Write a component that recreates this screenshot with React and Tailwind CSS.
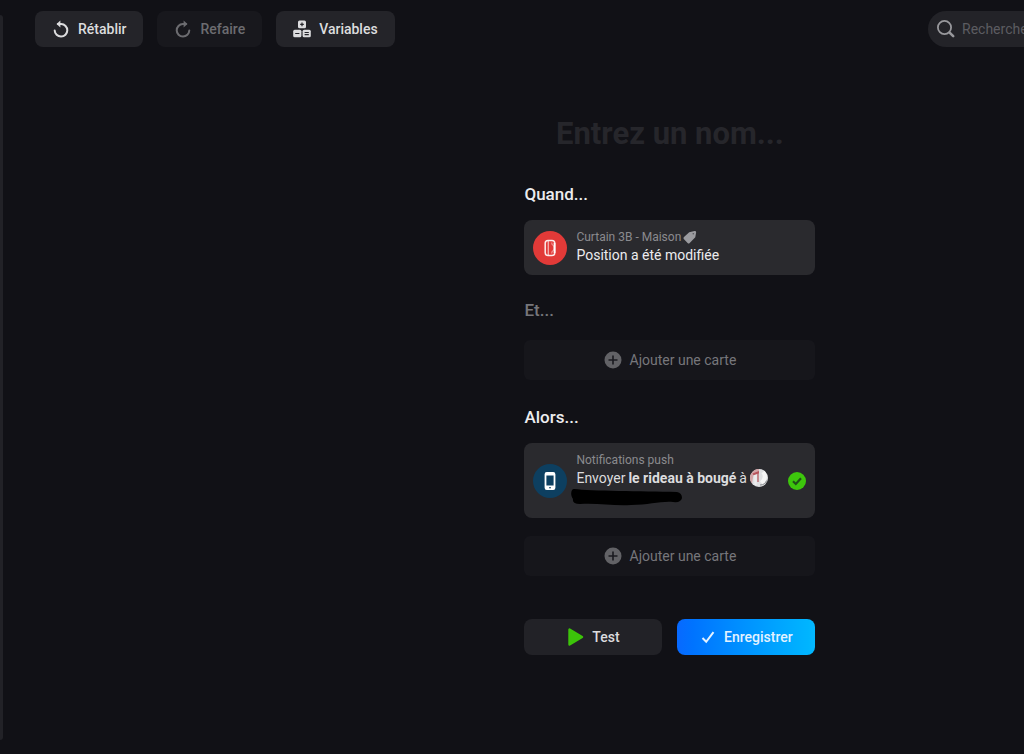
import { useState } from 'react';
import clsx from 'clsx';

function UndoIcon({ className }) {
  return (
    <svg viewBox="0 0 18 18" className={className} fill="none" stroke="currentColor" strokeWidth="2">
      <path d="M6 4h3.200A6.300 6.300 0 1 1 2.700 10.500" strokeLinecap="round" />
      <path d="M4.500 4 8.400.6v6.800z" fill="currentColor" stroke="none" />
    </svg>
  );
}

function BlocksIcon() {
  return (
    <svg viewBox="0 0 18 18" className="size-[18px]">
      <g fill="currentColor">
        <rect x="5" y="0.5" width="8" height="7.800" rx="1.500" />
        <rect x="0.2" y="9.800" width="8.200" height="7.400" rx="1.500" />
        <rect x="9.600" y="9.800" width="8.200" height="7.400" rx="1.500" />
      </g>
      <path d="M7.200 4.400h3.600M9 2.600v3.600M2.200 13.500h4.200M11.600 12.500h4.200M11.600 14.600h4.200" stroke="#242429" strokeWidth="1.200" />
    </svg>
  );
}

function SearchIcon() {
  return (
    <svg viewBox="0 0 20 20" className="size-5 shrink-0" fill="none" stroke="currentColor">
      <circle cx="8.500" cy="8.500" r="6.600" strokeWidth="1.800" />
      <path d="m13.600 13.600 3.600 3.600" strokeWidth="2.600" strokeLinecap="round" />
    </svg>
  );
}

function CurtainIcon() {
  return (
    <svg viewBox="0 0 34 34" className="size-[34px]" fill="none" stroke="#fff">
      <rect x="12.200" y="9.500" width="9.600" height="15" rx="2.800" strokeWidth="1.500" opacity="0.9" />
      <path d="M15.300 10v14" strokeWidth="1.300" opacity="0.6" />
      <path d="M18.800 11.500c0 2.500.6 3 2.200 3.500v4c-1.600.5-2.200 1-2.200 3.500" strokeWidth="0.900" opacity="0.6" />
      <path d="M21.500 12v10" strokeWidth="1.700" />
    </svg>
  );
}

function PhoneIcon() {
  return (
    <svg viewBox="0 0 34 34" className="size-[34px]">
      <path
        fill="#fff"
        fillRule="evenodd"
        d="M13.800 8h6.400A2.200 2.200 0 0 1 22.400 10.200V23.800A2.200 2.200 0 0 1 20.200 26H13.800A2.200 2.200 0 0 1 11.600 23.800V10.200A2.200 2.200 0 0 1 13.800 8zM13.400 11.500V21.500H20.600V11.500zM16 23.200v1h2v-1z"
      />
    </svg>
  );
}

function TagIcon() {
  return (
    <svg viewBox="0 0 14 14" className="size-3.5">
      <path fill="#9b9b9f" d="M6.200 2.200 11.500 1a1.400 1.400 0 0 1 1.600 1.600l-.8 4.600-5.600 5.700a1.500 1.500 0 0 1-2.100 0L1 9.200a1.500 1.500 0 0 1 0-2.100z" />
      <circle cx="10.300" cy="3.800" r="0.800" fill="#55555a" />
    </svg>
  );
}

function PlusIcon() {
  return (
    <svg viewBox="0 0 18 18" className="size-[18px]">
      <circle cx="9" cy="9" r="8.500" fill="#626266" />
      <path d="M9 4.500v9M4.500 9h9" stroke="#1b1b20" strokeWidth="1.600" />
    </svg>
  );
}

function Avatar() {
  return (
    <svg viewBox="0 0 18 18" className="size-[18px] shrink-0">
      <circle cx="9" cy="9" r="9" fill="#dfe0e2" />
      <path d="M9 0a9 9 0 0 0-7 14.600L3.500 6 9 3z" fill="#d3a5a8" />
      <path d="M2.500 4.500 9 2v2.300L3.500 6.300z" fill="#b8545c" />
      <path d="M5.500 6v10" stroke="#ececee" strokeWidth="2.400" />
      <path d="M8 4v9" stroke="#b34f57" strokeWidth="1.200" />
      <path d="M13 3c2.500 3 2.500 7-1.500 11" stroke="#f6f6f6" strokeWidth="4" fill="none" />
      <path d="M10 16c3.500 0 5.500-1.500 6.700-4.500" stroke="#85888b" strokeWidth="1" fill="none" />
    </svg>
  );
}

function CheckBadge() {
  return (
    <svg viewBox="0 0 18 18" className="size-[18px] shrink-0">
      <circle cx="9" cy="9" r="9" fill="#3dc60c" />
      <path d="m5 9.300 2.800 2.700L13 6.300" fill="none" stroke="#21501a" strokeWidth="2.200" />
    </svg>
  );
}

function ToolbarButton({ icon, label, disabled }) {
  return (
    <button
      type="button"
      disabled={disabled}
      className={clsx(
        'flex h-9 items-center gap-2 rounded-lg px-[17px] text-sm font-medium',
        disabled ? 'bg-[#18181d] text-[#6c6c70]' : 'bg-[#242429] text-[#dcdcde]',
      )}
    >
      {icon}
      {label}
    </button>
  );
}

function SectionTitle({ children, muted }) {
  return (
    <h2 className={clsx('text-[17px] leading-6 font-medium', muted ? 'text-[#76767b]' : 'text-[#ececee]')}>
      {children}
    </h2>
  );
}

function AddCard() {
  return (
    <button type="button" className="mt-[18px] flex h-10 w-full items-center justify-center gap-2 rounded-md bg-[#16161b] text-sm text-[#77777b]">
      <PlusIcon />
      Ajouter une carte
    </button>
  );
}

export default function App() {
  const [name, setName] = useState('');
  const [query, setQuery] = useState('');

  return (
    <div className="flex min-h-screen overflow-hidden bg-[#111116] font-[Roboto,sans-serif]">
      {/* Edge of the side panel */}
      <aside className="mt-[15px] mb-3.5 w-[3px] shrink-0 rounded-r-sm bg-[#222227]" />

      <div className="min-w-0 flex-1">
        <header className="flex items-center justify-between pt-[11px] pl-8">
          <div className="flex gap-3.5">
            <ToolbarButton label="Rétablir" icon={<UndoIcon className="size-[18px]" />} />
            <ToolbarButton label="Refaire" disabled icon={<UndoIcon className="size-[18px] -scale-x-100" />} />
            <ToolbarButton label="Variables" icon={<BlocksIcon />} />
          </div>
          <label className="flex h-9 w-24 items-center gap-1.5 rounded-l-full bg-[#232328] pl-2 text-[#98989c]">
            <SearchIcon />
            <input
              type="text"
              aria-label="Rechercher"
              placeholder="Rechercher"
              value={query}
              onChange={e => setQuery(e.target.value)}
              className="w-full min-w-0 bg-transparent text-sm text-white outline-none placeholder:text-[#5c5c61]"
            />
          </label>
        </header>

        <main className="grid grid-cols-[5fr_291px_2fr] pt-[67px] pb-8">
          <div className="col-start-2">
            <input
              type="text"
              aria-label="Nom du flow"
              placeholder="Entrez un nom..."
              value={name}
              onChange={e => setName(e.target.value)}
              className="h-10 w-full bg-transparent text-center text-[31px] font-bold text-white outline-none placeholder:text-[#26262b]"
            />

            <section className="mt-7">
              <SectionTitle>Quand...</SectionTitle>
              <button type="button" className="mt-3.5 flex h-[55px] w-full gap-[9px] rounded-lg bg-[#2a2a2e] px-[9px] text-left">
                <span className="self-center rounded-full bg-[#e23a38]"><CurtainIcon /></span>
                <span className="self-start pt-2">
                  <span className="flex items-center gap-0.5 text-xs leading-[18px] text-[#8a8a8e]">
                    Curtain 3B - Maison <TagIcon />
                  </span>
                  <span className="block text-sm leading-[18px] text-[#ececee]">Position a été modifiée</span>
                </span>
              </button>
            </section>

            <section className="mt-[23px]">
              <SectionTitle muted>Et...</SectionTitle>
              <AddCard />
            </section>

            <section className="mt-[25px]">
              <SectionTitle>Alors...</SectionTitle>
              <button type="button" className="relative mt-3.5 flex h-[75px] w-full items-center gap-[9px] rounded-lg bg-[#2a2a2e] px-[9px] text-left">
                <span className="rounded-full bg-[#0d3f60]"><PhoneIcon /></span>
                <span className="flex-1 self-start pt-2">
                  <span className="block text-xs leading-[18px] text-[#8a8a8e]">Notifications push</span>
                  <span className="flex items-center gap-[3px] text-sm leading-[18px] text-[#dcdcde]">
                    Envoyer <b className="font-bold">le rideau à bougé</b> à <Avatar />
                  </span>
                </span>
                <CheckBadge />
                <svg viewBox="0 0 112 18" className="absolute top-[45px] left-[47px] h-[18px] w-28">
                  <path d="M3 1C20 3 70 3 106 4q5 1 5 6-1 5-9 4c-12-1-24 3-42 3C42 18 28 15 9 16q-8 0-7-5C-1 7 0 1 3 1z" fill="#000" />
                </svg>
              </button>
              <AddCard />
            </section>

            <div className="mt-[43px] grid grid-cols-2 gap-[15px]">
              <button type="button" className="flex h-9 items-center justify-center gap-2 rounded-lg bg-[#222227] text-sm font-medium text-[#dcdcde]">
                <svg viewBox="0 0 17 18" className="h-[18px] w-[17px]">
                  <path d="M2.500 1.500v15L15 9z" fill="#3cc40a" stroke="#3cc40a" strokeWidth="2.400" strokeLinejoin="round" />
                </svg>
                Test
              </button>
              <button type="button" className="flex h-9 items-center justify-center gap-2 rounded-lg bg-linear-to-r from-[#0869ff] to-[#04b8ff] text-sm font-medium text-[#e4f2ff]">
                <svg viewBox="0 0 16 16" className="size-4" fill="none" stroke="currentColor" strokeWidth="2">
                  <path d="m2.500 9 3.700 3.800L13.500 3.200" />
                </svg>
                Enregistrer
              </button>
            </div>
          </div>
        </main>
      </div>
    </div>
  );
}
